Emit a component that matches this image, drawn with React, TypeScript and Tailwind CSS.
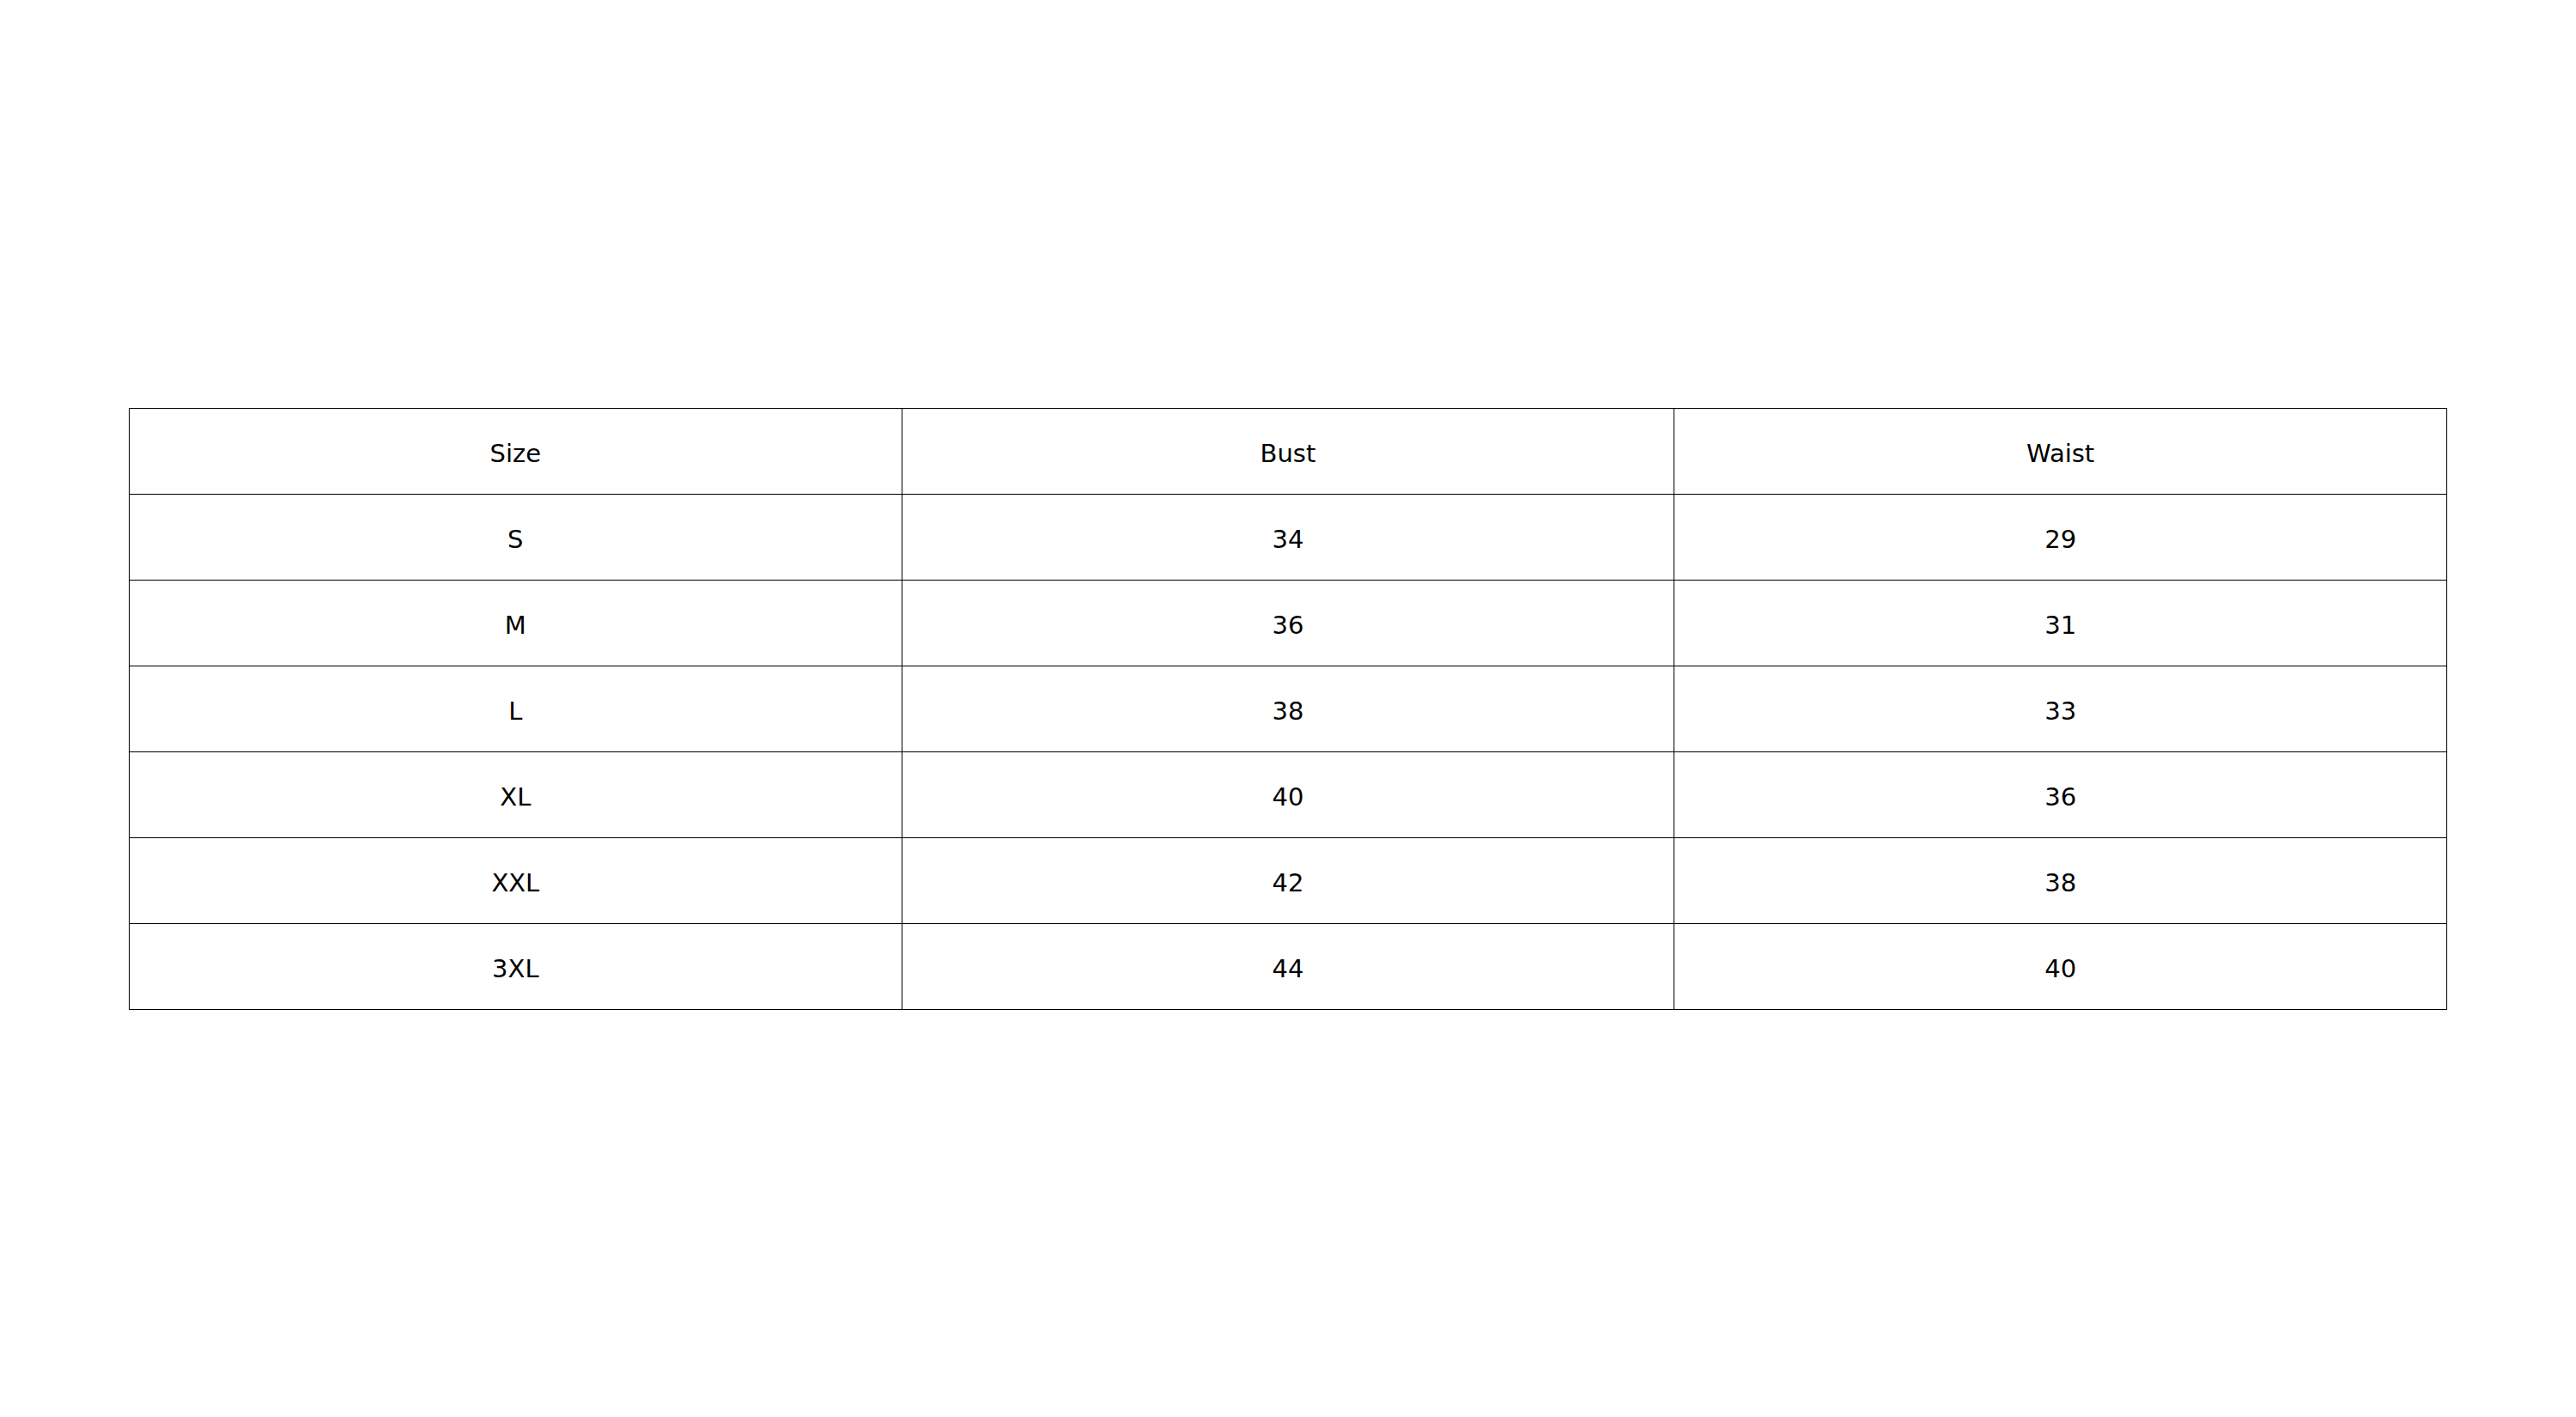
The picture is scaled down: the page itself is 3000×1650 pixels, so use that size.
import React from "react";

const rows = [
  ["Size", "Bust", "Waist"],
  ["S", "34", "29"],
  ["M", "36", "31"],
  ["L", "38", "33"],
  ["XL", "40", "36"],
  ["XXL", "42", "38"],
  ["3XL", "44", "40"],
];

export default function App() {
  return (
    <div className="flex h-[1650px] w-[3000px] items-center justify-center bg-white" style={{ fontFamily: '"DejaVu Sans", sans-serif' }}>
      <table className="w-[2700px] table-fixed border-collapse text-[29px] text-black">
        <tbody>
          {rows.map((r, i) => (
            <tr key={i} className="h-[100px]">
              {r.map((c, j) => (
                <td key={j} className="border border-black px-0 pb-0 pt-[8px] text-center align-middle">
                  {c}
                </td>
              ))}
            </tr>
          ))}
        </tbody>
      </table>
    </div>
  );
}
